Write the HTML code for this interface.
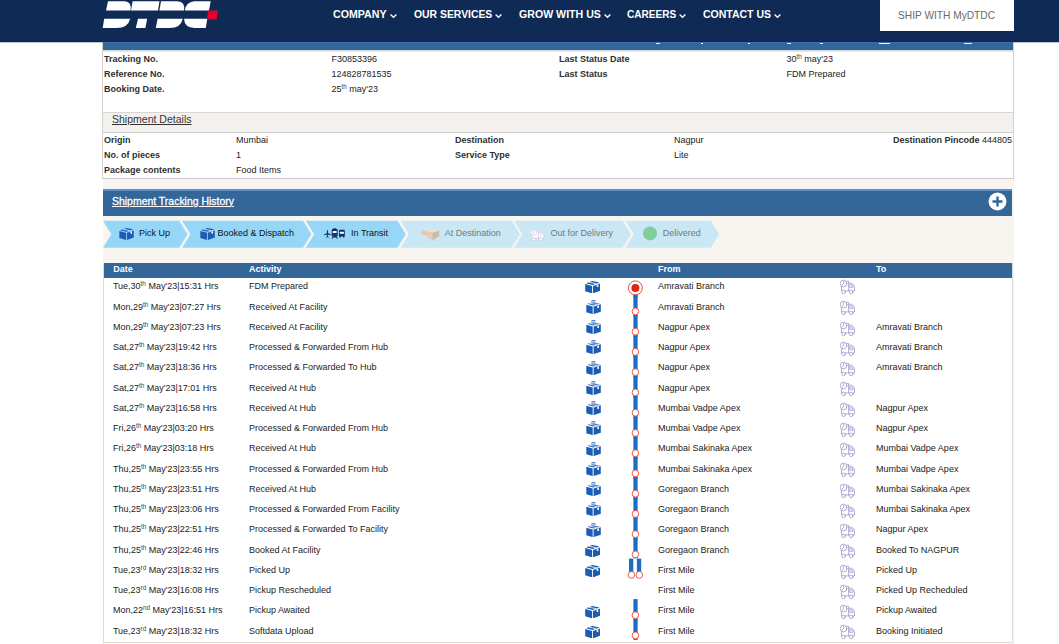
<!DOCTYPE html>
<html>
<head>
<meta charset="utf-8">
<title>DTDC Tracking</title>
<style>
*{box-sizing:border-box;margin:0;padding:0}
html,body{width:1059px;height:644px;overflow:hidden;background:#fff;font-family:"Liberation Sans",sans-serif;color:#222;}
body{position:relative}
.abs{position:absolute}
#hdr{position:absolute;left:0;top:0;width:1059px;height:42px;background:#0f2a54;z-index:10}
.nav{position:absolute;top:7px;color:#fff;font-weight:bold;font-size:11.5px;white-space:nowrap;line-height:14px;transform-origin:0 0}
.chev{position:absolute;top:13.6px}
#hdr:after{content:'';position:absolute;left:0;top:42px;width:1059px;height:1px;background:rgba(15,42,84,.28)}
#ship{position:absolute;left:880px;top:0;width:134px;height:31px;background:#fff}
#ship span{position:absolute;left:18px;top:8px;color:#6a6a6a;font-size:11px;line-height:14px;white-space:nowrap;transform-origin:0 0}
#wrap{position:absolute;left:102px;top:42px;width:912px;height:137px;border-left:1px solid #d2d2d2;border-right:1px solid #d2d2d2;background:#fff}
#bar1{position:absolute;left:103px;top:42px;width:910px;height:8px;background:#336699;border-top:1px solid #3f6da3;z-index:11}
#bar1b{position:absolute;left:103px;top:50px;width:910px;height:2px;background:linear-gradient(#d4d4d4,#e9e9e9)}
.t{position:absolute;font-size:9px;line-height:12px;white-space:nowrap;color:#222}
.b{font-weight:bold;color:#303030}
sup{color:#444;font-size:6.4px;line-height:0;vertical-align:baseline;position:relative;top:-3.4px}
#sdh{position:absolute;left:103px;top:112px;width:910px;height:21px;background:#f3f1ee;border-top:1px solid #d8d6d3;border-bottom:1px solid #d0cecb}
#sdh span{position:absolute;left:9px;top:-1px;font-size:10.8px;line-height:14px;text-decoration:underline;color:#333;transform-origin:0 0}
#beige{position:absolute;left:102.5px;top:178px;width:911.5px;height:466px;background:#f8f5f1;border-top:1px solid #ccc}
#tbox{position:absolute;left:103.2px;top:263px;width:909.8px;height:379.8px;background:#fff;border:1px solid #dcdcdc}
#hist{position:absolute;left:103.3px;top:188.8px;width:908.7px;height:27.5px;background:#336699;border-top:2px solid #5b90cc}
#hist span{position:absolute;left:8.7px;top:3px;font-size:10.8px;line-height:14px;color:#fff;text-decoration:underline;transform-origin:0 0;-webkit-text-stroke:0.3px #fff}
#thead{position:absolute;left:104.2px;top:263px;width:907.7px;height:14.6px;background:#336699}
#thead span{position:absolute;top:0px;font-size:9px;font-weight:bold;color:#fff;line-height:12px}

.st{position:absolute;top:227px;font-size:9px;line-height:12px;white-space:nowrap}
.ic{position:absolute}
.ln{position:absolute;background:#1a6dc2;width:4px}
.c{position:absolute;width:7.4px;height:7.8px;border:1px solid #e6493e;border-radius:50%;background:#fff}
</style>
</head>
<body>
<svg width="0" height="0" style="position:absolute">
<defs>
<symbol id="bo" viewBox="0 0 15.2 12.4">
<path d="M0.2 3.1 L7.1 4.9 L7.1 12.4 L0.2 10.3 Z" fill="#1c5db3"/>
<path d="M8.0 4.9 L15.1 2.5 L15.1 9.8 L8.0 12.4 Z" fill="#1c5db3"/>
<path d="M1.0 2.2 L7.3 0 L14.6 1.4 L7.6 3.9 Z" fill="#1c5db3"/>
<path d="M3.8 1.2 L11.2 2.7" stroke="#fff" stroke-width="0.8"/>
<path d="M11.6 3.8 L13.3 3.2 L13.3 6.2 L11.6 5.4 Z" fill="#fff"/>
</symbol>
<symbol id="bt" viewBox="0 0 14.6 12.8" preserveAspectRatio="none">
<path d="M5.4 0.45 H9.1" stroke="#1c5db3" stroke-width="0.7"/>
<path d="M4.6 1.9 H9.6" stroke="#1c5db3" stroke-width="0.7"/>
<path d="M0.3 4.4 L6.5 5.9 L6.5 12.8 L0.3 11.2 Z" fill="#1c5db3"/>
<path d="M7.4 5.9 L14.4 3.9 L14.4 10.6 L7.4 12.8 Z" fill="#1c5db3"/>
<path d="M1.2 3.5 L6.8 2.4 L13.7 3.3 L7.0 5.1 Z" fill="#1c5db3"/>
<path d="M3.8 3.0 L10.6 4.1" stroke="#fff" stroke-width="0.7"/>
<path d="M10.9 5.2 L12.6 4.7 L12.6 7.4 L10.9 6.8 Z" fill="#fff"/>
</symbol>
<symbol id="tk" viewBox="0 0 16 16" preserveAspectRatio="none">
<g fill="none" stroke="#a094ca" stroke-width="0.8" stroke-linecap="round" stroke-linejoin="round">
<circle cx="3.7" cy="4.5" r="3.4"/>
<path d="M3.7 2.3 V4.7 L2.4 5.8"/>
<path d="M6.9 2.4 H8.9 V11.9 M1.5 7.7 V11.9 H1.9 M5.6 11.9 H9.7"/>
<path d="M8.9 4.2 H12 Q14.2 5 15 8 V11.9 H13.5"/>
<path d="M10.4 5.8 H12.2 L13.6 8.3 H10.4 Z"/>
<circle cx="3.7" cy="12.9" r="1.8"/>
<circle cx="11.6" cy="12.9" r="1.8"/>
</g></symbol>
</defs></svg>
<div id="wrap"></div>
<div id="bar1"><i style="position:absolute;left:552.7px;top:0.3px;width:4.1px;height:1.2px;background:#fff;opacity:.9"></i><i style="position:absolute;left:597.8px;top:0.3px;width:2.7px;height:1.2px;background:#fff;opacity:.9"></i><i style="position:absolute;left:644.6px;top:0.3px;width:2.6px;height:1.2px;background:#fff;opacity:.9"></i><i style="position:absolute;left:684.0px;top:0.3px;width:4px;height:1.2px;background:#fff;opacity:.9"></i><i style="position:absolute;left:717.4px;top:0.3px;width:2.6px;height:1.2px;background:#fff;opacity:.9"></i><i style="position:absolute;left:775.7px;top:0.3px;width:11.7px;height:1.2px;background:#fff;opacity:.9"></i><i style="position:absolute;left:861.0px;top:0.3px;width:8px;height:1.2px;background:#fff;opacity:.9"></i></div><div id="bar1b"></div>
<div id="hdr">
  <svg class="abs" style="left:0;top:0" width="230" height="32" viewBox="0 0 230 32">
    <g fill="#fff">
      <path d="M108 1.2 L124.5 1.2 Q132 1.6 130.5 10.4 L106 10.4 Z"/>
      <path d="M132.6 1.2 L159.5 1.2 L158 10.4 L131 10.4 Z"/>
      <path d="M161 1.2 L177.5 1.2 Q185.4 1.6 184 10.4 L159.4 10.4 Z"/>
      <path d="M194 1.2 L210.7 1.2 L209 10.4 L184.8 10.4 Q186 2 194 1.2 Z"/>
      <path d="M104.2 18.7 L130.2 18.7 Q128 28 116.5 28 L102.7 28 Z"/>
      <path d="M138 18.7 L147.2 18.7 L145.4 28 L135.8 28 Z"/>
      <path d="M157.6 18.7 L182.8 18.7 Q180.6 28 170 28 L155.8 28 Z"/>
      <path d="M184 18.7 L207.3 18.7 L205.8 28 L194.5 28 Q184.5 27.6 184 18.7 Z"/>
    </g>
    <path d="M208.3 10.4 L218 10.4 L216.5 19.4 L206.8 19.4 Z" fill="#e4002b"/>
  </svg>
  <div class="nav" id="nav0" style="transform:scaleX(0.9234);left:332.9px">COMPANY</div>
  <svg class="chev" style="left:390.0px" width="7" height="5" viewBox="0 0 7 5"><path d="M0.6 0.6 L3.5 3.2 L6.4 0.6" fill="none" stroke="#fff" stroke-width="1.4"/></svg>
  <div class="nav" id="nav1" style="transform:scaleX(0.9031);left:413.7px">OUR SERVICES</div>
  <svg class="chev" style="left:494.8px" width="7" height="5" viewBox="0 0 7 5"><path d="M0.6 0.6 L3.5 3.2 L6.4 0.6" fill="none" stroke="#fff" stroke-width="1.4"/></svg>
  <div class="nav" id="nav2" style="transform:scaleX(0.9223);left:518.5px">GROW WITH US</div>
  <svg class="chev" style="left:603.7px" width="7" height="5" viewBox="0 0 7 5"><path d="M0.6 0.6 L3.5 3.2 L6.4 0.6" fill="none" stroke="#fff" stroke-width="1.4"/></svg>
  <div class="nav" id="nav3" style="transform:scaleX(0.8767);left:626.7px">CAREERS</div>
  <svg class="chev" style="left:679.1px" width="7" height="5" viewBox="0 0 7 5"><path d="M0.6 0.6 L3.5 3.2 L6.4 0.6" fill="none" stroke="#fff" stroke-width="1.4"/></svg>
  <div class="nav" id="nav4" style="transform:scaleX(0.9124);left:702.6px">CONTACT US</div>
  <svg class="chev" style="left:773.6px" width="7" height="5" viewBox="0 0 7 5"><path d="M0.6 0.6 L3.5 3.2 L6.4 0.6" fill="none" stroke="#fff" stroke-width="1.4"/></svg>
  <div id="ship"><span style="transform:scaleX(0.9246)">SHIP WITH MyDTDC</span></div>
</div>

<div class="t b" style="left:104px;top:53px">Tracking No.</div>
<div class="t" style="left:331.5px;top:53px">F30853396</div>
<div class="t b" style="left:104px;top:68px">Reference No.</div>
<div class="t" style="left:331.5px;top:68px">124828781535</div>
<div class="t b" style="left:104px;top:83px">Booking Date.</div>
<div class="t" style="left:331.5px;top:83px">25<sup>th</sup> may'23</div>
<div class="t b" style="left:559px;top:53px">Last Status Date</div>
<div class="t" style="left:786.4px;top:53px">30<sup>th</sup> may'23</div>
<div class="t b" style="left:559px;top:68px">Last Status</div>
<div class="t" style="left:786.4px;top:68px">FDM Prepared</div>
<div id="sdh"><span style="transform:scaleX(0.9740)">Shipment Details</span></div>
<div class="t b" style="left:104px;top:134px">Origin</div>
<div class="t" style="left:236px;top:134px">Mumbai</div>
<div class="t b" style="left:104px;top:149px">No. of pieces</div>
<div class="t" style="left:236px;top:149px">1</div>
<div class="t b" style="left:104px;top:164px">Package contents</div>
<div class="t" style="left:236px;top:164px">Food Items</div>
<div class="t b" style="left:455px;top:134px">Destination</div>
<div class="t" style="left:674px;top:134px">Nagpur</div>
<div class="t b" style="left:455px;top:149px">Service Type</div>
<div class="t" style="left:674px;top:149px">Lite</div>
<div class="t" style="left:893px;top:134px"><span class="b">Destination Pincode</span> 444805</div>
<div id="beige"></div><div id="tbox"></div>
<div id="hist"><span style="transform:scaleX(0.9681)">Shipment Tracking History</span>
  <svg class="abs" style="left:885px;top:1.6px" width="19" height="19" viewBox="0 0 19 19"><circle cx="9.5" cy="9.5" r="9" fill="#fff"/><path d="M9.5 4.5v10M4.5 9.5h10" stroke="#336699" stroke-width="2.4"/></svg>
</div>
<svg class="abs" style="left:0;top:216px" width="1059" height="40" viewBox="0 216 1059 40">
<path d="M103 220.8 L179.2 220.8 L187.6 234.3 L179.2 247.7 L103 247.7 L111.4 234.3 Z" fill="#96d6f6"/>
<path d="M182.1 220.8 L303.0 220.8 L311.4 234.3 L303.0 247.7 L182.1 247.7 L190.5 234.3 Z" fill="#96d6f6"/>
<path d="M305.8 220.8 L397.40000000000003 220.8 L405.8 234.3 L397.40000000000003 247.7 L305.8 247.7 L314.2 234.3 Z" fill="#96d6f6"/>
<path d="M400.5 220.8 L511.6 220.8 L520 234.3 L511.6 247.7 L400.5 247.7 L408.9 234.3 Z" fill="#c9e7f5"/>
<path d="M514 220.8 L622.6 220.8 L631 234.3 L622.6 247.7 L514 247.7 L522.4 234.3 Z" fill="#c9e7f5"/>
<path d="M625.5 220.8 L710.8000000000001 220.8 L719.2 234.3 L710.8000000000001 247.7 L625.5 247.7 L633.9 234.3 Z" fill="#c9e7f5"/>
<circle cx="650" cy="233.4" r="7" fill="#7ecf9b"/>
</svg>
<svg class="ic" style="left:119px;top:228px" width="15" height="12"><use href="#bo"/></svg>
<svg class="ic" style="left:200px;top:228px" width="15" height="12"><use href="#bo"/></svg>
<svg class="ic" style="left:324px;top:228px" width="21" height="11" viewBox="0 0 21 11"><g fill="#0f2f63">
<path d="M3.45 1.9 Q3.95 1.9 3.95 2.8 L3.95 5.0 L6.9 6.5 L6.9 7.3 L3.95 6.5 L3.9 8.4 L4.8 9.0 L4.8 9.5 L3.45 9.2 L2.1 9.5 L2.1 9.0 L3.0 8.4 L2.95 6.5 L0 7.3 L0 6.5 L2.95 5.0 L2.95 2.8 Q2.95 1.9 3.45 1.9 Z"/>
<path d="M10.7 0.3 Q13.7 0.6 13.7 2.6 V7.6 Q13.7 8.7 12.6 8.7 L14 10.7 H12.9 L12.1 9.5 H9.3 L8.5 10.7 H7.4 L8.8 8.7 Q7.7 8.7 7.7 7.6 V2.6 Q7.7 0.6 10.7 0.3 Z"/>
<path d="M16.2 1.7 H19.6 Q20.8 1.7 20.8 2.9 V8.4 H20.4 V9.5 H19.1 V8.6 H16.7 V9.5 H15.4 V8.4 H15 V2.9 Q15 1.7 16.2 1.7 Z"/>
</g><rect x="8.7" y="3.0" width="4" height="1.9" rx="0.5" fill="#fff"/><rect x="15.8" y="3.8" width="4.2" height="1.9" rx="0.5" fill="#fff"/>
<circle cx="9.3" cy="6.9" r="0.45" fill="#9bd8f6"/><circle cx="12.1" cy="6.9" r="0.45" fill="#9bd8f6"/></svg>
<svg class="ic" style="left:420.5px;top:228px" width="19" height="13" viewBox="0 0 19 13">
<path d="M0.6 2.4 L6.5 1.9 L10.4 2.3 L6.4 3.5 Z" fill="#ecdcc9"/>
<path d="M0.6 2.4 L6.4 3.5 L6.4 8.0 L0.6 6.8 Z" fill="#dfc9b1"/>
<path d="M6.4 3.6 L11.4 4.6 L11.4 12.6 L6.4 10 Z" fill="#e3cfb9"/>
<path d="M11.4 4.6 L18.1 2.6 L18.1 8.3 L11.4 12.6 Z" fill="#d0b9a0"/>
<path d="M6.4 3.6 L10.6 1.0 L17.6 1.3 L18.1 2.6 L11.4 4.6 Z" fill="#efe0cf"/>
<rect x="8.6" y="4.6" width="0.9" height="1.5" fill="#eaa59c"/>
</svg>
<svg class="ic" style="left:530px;top:228.5px" width="15" height="12.5" viewBox="0 0 16 14" preserveAspectRatio="none">
<g fill="#fdfbfd" stroke="#cfc4e0" stroke-width="0.7" stroke-linejoin="round">
<path d="M5.6 2.0 H9.0 V10.4 H1.6 V6.6"/>
<path d="M9.0 3.8 H12.2 Q14.2 4.6 14.9 7.2 V10.4 H9.0 Z"/>
<circle cx="3.9" cy="3.8" r="3.3"/>
<circle cx="3.9" cy="11.4" r="1.7"/><circle cx="11.8" cy="11.4" r="1.7"/>
</g><path d="M3.9 1.8 V4 L2.6 5" stroke="#b9a9d6" stroke-width="0.7" fill="none"/><path d="M10.6 5.2 H12.4 L13.6 7.2 H10.6 Z" fill="#e6dff0"/></svg>
<div class="st" style="left:139px;color:#111">Pick Up</div>
<div class="st" style="left:217.5px;color:#111">Booked &amp; Dispatch</div>
<div class="st" style="left:351.1px;color:#111">In Transit</div>
<div class="st" style="left:444.8px;color:#777">At Destination</div>
<div class="st" style="left:550.6px;color:#777">Out for Delivery</div>
<div class="st" style="left:662.7px;color:#777">Delivered</div>
<div id="thead">
  <span style="left:9.1px">Date</span>
  <span style="left:144.8px">Activity</span>
  <span style="left:553.8px">From</span>
  <span style="left:771.8px">To</span>
</div>
<div class="t" style="left:112.9px;top:280px">Tue,30<sup>th</sup> May'23|15:31 Hrs</div>
<div class="t" style="left:249px;top:280px">FDM Prepared</div>
<div class="t" style="left:658px;top:280px">Amravati Branch</div>
<svg class="ic" style="left:585px;top:281.0px" width="15.2" height="12.4"><use href="#bo"/></svg>
<svg class="ic" style="left:839.8px;top:279.3px" width="15.5" height="16"><use href="#tk"/></svg>
<div class="t" style="left:112.9px;top:301px">Mon,29<sup>th</sup> May'23|07:27 Hrs</div>
<div class="t" style="left:249px;top:301px">Received At Facility</div>
<div class="t" style="left:658px;top:301px">Amravati Branch</div>
<svg class="ic" style="left:586.1px;top:299.8px" width="15" height="14.1" preserveAspectRatio="none"><use href="#bt"/></svg>
<svg class="ic" style="left:839.8px;top:300.2px" width="15.5" height="16"><use href="#tk"/></svg>
<div class="t" style="left:112.9px;top:321px">Mon,29<sup>th</sup> May'23|07:23 Hrs</div>
<div class="t" style="left:249px;top:321px">Received At Facility</div>
<div class="t" style="left:658px;top:321px">Nagpur Apex</div>
<div class="t" style="left:876px;top:321px">Amravati Branch</div>
<svg class="ic" style="left:586.1px;top:320.1px" width="15" height="14.1" preserveAspectRatio="none"><use href="#bt"/></svg>
<svg class="ic" style="left:839.8px;top:320.5px" width="15.5" height="16"><use href="#tk"/></svg>
<div class="t" style="left:112.9px;top:341px">Sat,27<sup>th</sup> May'23|19:42 Hrs</div>
<div class="t" style="left:249px;top:341px">Processed &amp; Forwarded From Hub</div>
<div class="t" style="left:658px;top:341px">Nagpur Apex</div>
<div class="t" style="left:876px;top:341px">Amravati Branch</div>
<svg class="ic" style="left:586.1px;top:340.3px" width="15" height="14.1" preserveAspectRatio="none"><use href="#bt"/></svg>
<svg class="ic" style="left:839.8px;top:340.7px" width="15.5" height="16"><use href="#tk"/></svg>
<div class="t" style="left:112.9px;top:361px">Sat,27<sup>th</sup> May'23|18:36 Hrs</div>
<div class="t" style="left:249px;top:361px">Processed &amp; Forwarded To Hub</div>
<div class="t" style="left:658px;top:361px">Nagpur Apex</div>
<div class="t" style="left:876px;top:361px">Amravati Branch</div>
<svg class="ic" style="left:586.1px;top:360.6px" width="15" height="14.1" preserveAspectRatio="none"><use href="#bt"/></svg>
<svg class="ic" style="left:839.8px;top:361.0px" width="15.5" height="16"><use href="#tk"/></svg>
<div class="t" style="left:112.9px;top:382px">Sat,27<sup>th</sup> May'23|17:01 Hrs</div>
<div class="t" style="left:249px;top:382px">Received At Hub</div>
<div class="t" style="left:658px;top:382px">Nagpur Apex</div>
<svg class="ic" style="left:586.1px;top:380.8px" width="15" height="14.1" preserveAspectRatio="none"><use href="#bt"/></svg>
<svg class="ic" style="left:839.8px;top:381.2px" width="15.5" height="16"><use href="#tk"/></svg>
<div class="t" style="left:112.9px;top:402px">Sat,27<sup>th</sup> May'23|16:58 Hrs</div>
<div class="t" style="left:249px;top:402px">Received At Hub</div>
<div class="t" style="left:658px;top:402px">Mumbai Vadpe Apex</div>
<div class="t" style="left:876px;top:402px">Nagpur Apex</div>
<svg class="ic" style="left:586.1px;top:401.1px" width="15" height="14.1" preserveAspectRatio="none"><use href="#bt"/></svg>
<svg class="ic" style="left:839.8px;top:401.5px" width="15.5" height="16"><use href="#tk"/></svg>
<div class="t" style="left:112.9px;top:422px">Fri,26<sup>th</sup> May'23|03:20 Hrs</div>
<div class="t" style="left:249px;top:422px">Processed &amp; Forwarded From Hub</div>
<div class="t" style="left:658px;top:422px">Mumbai Vadpe Apex</div>
<div class="t" style="left:876px;top:422px">Nagpur Apex</div>
<svg class="ic" style="left:586.1px;top:421.3px" width="15" height="14.1" preserveAspectRatio="none"><use href="#bt"/></svg>
<svg class="ic" style="left:839.8px;top:421.7px" width="15.5" height="16"><use href="#tk"/></svg>
<div class="t" style="left:112.9px;top:442px">Fri,26<sup>th</sup> May'23|03:18 Hrs</div>
<div class="t" style="left:249px;top:442px">Received At Hub</div>
<div class="t" style="left:658px;top:442px">Mumbai Sakinaka Apex</div>
<div class="t" style="left:876px;top:442px">Mumbai Vadpe Apex</div>
<svg class="ic" style="left:586.1px;top:441.6px" width="15" height="14.1" preserveAspectRatio="none"><use href="#bt"/></svg>
<svg class="ic" style="left:839.8px;top:442.0px" width="15.5" height="16"><use href="#tk"/></svg>
<div class="t" style="left:112.9px;top:463px">Thu,25<sup>th</sup> May'23|23:55 Hrs</div>
<div class="t" style="left:249px;top:463px">Processed &amp; Forwarded From Hub</div>
<div class="t" style="left:658px;top:463px">Mumbai Sakinaka Apex</div>
<div class="t" style="left:876px;top:463px">Mumbai Vadpe Apex</div>
<svg class="ic" style="left:586.1px;top:461.8px" width="15" height="14.1" preserveAspectRatio="none"><use href="#bt"/></svg>
<svg class="ic" style="left:839.8px;top:462.2px" width="15.5" height="16"><use href="#tk"/></svg>
<div class="t" style="left:112.9px;top:483px">Thu,25<sup>th</sup> May'23|23:51 Hrs</div>
<div class="t" style="left:249px;top:483px">Received At Hub</div>
<div class="t" style="left:658px;top:483px">Goregaon Branch</div>
<div class="t" style="left:876px;top:483px">Mumbai Sakinaka Apex</div>
<svg class="ic" style="left:586.1px;top:482.1px" width="15" height="14.1" preserveAspectRatio="none"><use href="#bt"/></svg>
<svg class="ic" style="left:839.8px;top:482.5px" width="15.5" height="16"><use href="#tk"/></svg>
<div class="t" style="left:112.9px;top:503px">Thu,25<sup>th</sup> May'23|23:06 Hrs</div>
<div class="t" style="left:249px;top:503px">Processed &amp; Forwarded From Facility</div>
<div class="t" style="left:658px;top:503px">Goregaon Branch</div>
<div class="t" style="left:876px;top:503px">Mumbai Sakinaka Apex</div>
<svg class="ic" style="left:586.1px;top:502.3px" width="15" height="14.1" preserveAspectRatio="none"><use href="#bt"/></svg>
<svg class="ic" style="left:839.8px;top:502.7px" width="15.5" height="16"><use href="#tk"/></svg>
<div class="t" style="left:112.9px;top:523px">Thu,25<sup>th</sup> May'23|22:51 Hrs</div>
<div class="t" style="left:249px;top:523px">Processed &amp; Forwarded To Facility</div>
<div class="t" style="left:658px;top:523px">Goregaon Branch</div>
<div class="t" style="left:876px;top:523px">Nagpur Apex</div>
<svg class="ic" style="left:586.1px;top:522.6px" width="15" height="14.1" preserveAspectRatio="none"><use href="#bt"/></svg>
<svg class="ic" style="left:839.8px;top:523.0px" width="15.5" height="16"><use href="#tk"/></svg>
<div class="t" style="left:112.9px;top:544px">Thu,25<sup>th</sup> May'23|22:46 Hrs</div>
<div class="t" style="left:249px;top:544px">Booked At Facility</div>
<div class="t" style="left:658px;top:544px">Goregaon Branch</div>
<div class="t" style="left:876px;top:544px">Booked To NAGPUR</div>
<svg class="ic" style="left:585px;top:544.8px" width="15.2" height="12.4"><use href="#bo"/></svg>
<svg class="ic" style="left:839.8px;top:543.2px" width="15.5" height="16"><use href="#tk"/></svg>
<div class="t" style="left:112.9px;top:564px">Tue,23<sup>rd</sup> May'23|18:32 Hrs</div>
<div class="t" style="left:249px;top:564px">Picked Up</div>
<div class="t" style="left:658px;top:564px">First Mile</div>
<div class="t" style="left:876px;top:564px">Picked Up</div>
<svg class="ic" style="left:585px;top:565.1px" width="15.2" height="12.4"><use href="#bo"/></svg>
<svg class="ic" style="left:839.8px;top:563.5px" width="15.5" height="16"><use href="#tk"/></svg>
<div class="t" style="left:112.9px;top:584px">Tue,23<sup>rd</sup> May'23|16:08 Hrs</div>
<div class="t" style="left:249px;top:584px">Pickup Rescheduled</div>
<div class="t" style="left:658px;top:584px">First Mile</div>
<div class="t" style="left:876px;top:584px">Picked Up Recheduled</div>
<svg class="ic" style="left:839.8px;top:583.7px" width="15.5" height="16"><use href="#tk"/></svg>
<div class="t" style="left:112.9px;top:604px">Mon,22<sup>nd</sup> May'23|16:51 Hrs</div>
<div class="t" style="left:249px;top:604px">Pickup Awaited</div>
<div class="t" style="left:658px;top:604px">First Mile</div>
<div class="t" style="left:876px;top:604px">Pickup Awaited</div>
<svg class="ic" style="left:585px;top:605.6px" width="15.2" height="12.4"><use href="#bo"/></svg>
<svg class="ic" style="left:839.8px;top:604.0px" width="15.5" height="16"><use href="#tk"/></svg>
<div class="t" style="left:112.9px;top:625px">Tue,23<sup>rd</sup> May'23|18:32 Hrs</div>
<div class="t" style="left:249px;top:625px">Softdata Upload</div>
<div class="t" style="left:658px;top:625px">First Mile</div>
<div class="t" style="left:876px;top:625px">Booking Initiated</div>
<svg class="ic" style="left:585px;top:625.8px" width="15.2" height="12.4"><use href="#bo"/></svg>
<svg class="ic" style="left:839.8px;top:624.2px" width="15.5" height="16"><use href="#tk"/></svg>
<svg class="abs" style="left:0;top:0" width="1059" height="644" viewBox="0 0 1059 644"><rect x="633.4" y="293.6" width="4.2" height="4" fill="#1a6dc2"/><rect x="633.4" y="295.3" width="4.2" height="21.5" fill="#1a6dc2"/><rect x="633.4" y="315.6" width="4.2" height="21.5" fill="#1a6dc2"/><rect x="633.4" y="335.8" width="4.2" height="21.5" fill="#1a6dc2"/><rect x="633.4" y="356.1" width="4.2" height="21.5" fill="#1a6dc2"/><rect x="633.4" y="376.3" width="4.2" height="21.5" fill="#1a6dc2"/><rect x="633.4" y="396.6" width="4.2" height="21.5" fill="#1a6dc2"/><rect x="633.4" y="416.8" width="4.2" height="21.5" fill="#1a6dc2"/><rect x="633.4" y="437.1" width="4.2" height="21.5" fill="#1a6dc2"/><rect x="633.4" y="457.3" width="4.2" height="21.5" fill="#1a6dc2"/><rect x="633.4" y="477.6" width="4.2" height="21.5" fill="#1a6dc2"/><rect x="633.4" y="497.8" width="4.2" height="21.5" fill="#1a6dc2"/><rect x="633.4" y="518.1" width="4.2" height="21.5" fill="#1a6dc2"/><rect x="633.4" y="538.3" width="4.2" height="20.0" fill="#1a6dc2"/><rect x="629.0" y="558.6" width="4.3" height="18" fill="#1a6dc2"/><rect x="636.9" y="558.6" width="4.3" height="18" fill="#1a6dc2"/><rect x="633.4" y="599.1" width="4.2" height="21.5" fill="#1a6dc2"/><rect x="633.4" y="619.3" width="4.2" height="20.6" fill="#1a6dc2"/><circle cx="635.4" cy="287.9" r="7" fill="#fff" stroke="#e3392d" stroke-width="0.9"/><circle cx="635.4" cy="287.9" r="4" fill="#e2231a"/><ellipse cx="635.4" cy="311.4" rx="3.25" ry="3.45" fill="#fff" stroke="#e6493e" stroke-width="0.9"/><ellipse cx="635.4" cy="331.7" rx="3.25" ry="3.45" fill="#fff" stroke="#e6493e" stroke-width="0.9"/><ellipse cx="635.4" cy="351.9" rx="3.25" ry="3.45" fill="#fff" stroke="#e6493e" stroke-width="0.9"/><ellipse cx="635.4" cy="372.2" rx="3.25" ry="3.45" fill="#fff" stroke="#e6493e" stroke-width="0.9"/><ellipse cx="635.4" cy="392.4" rx="3.25" ry="3.45" fill="#fff" stroke="#e6493e" stroke-width="0.9"/><ellipse cx="635.4" cy="412.7" rx="3.25" ry="3.45" fill="#fff" stroke="#e6493e" stroke-width="0.9"/><ellipse cx="635.4" cy="432.9" rx="3.25" ry="3.45" fill="#fff" stroke="#e6493e" stroke-width="0.9"/><ellipse cx="635.4" cy="453.2" rx="3.25" ry="3.45" fill="#fff" stroke="#e6493e" stroke-width="0.9"/><ellipse cx="635.4" cy="473.4" rx="3.25" ry="3.45" fill="#fff" stroke="#e6493e" stroke-width="0.9"/><ellipse cx="635.4" cy="493.7" rx="3.25" ry="3.45" fill="#fff" stroke="#e6493e" stroke-width="0.9"/><ellipse cx="635.4" cy="513.9" rx="3.25" ry="3.45" fill="#fff" stroke="#e6493e" stroke-width="0.9"/><ellipse cx="635.4" cy="534.2" rx="3.25" ry="3.45" fill="#fff" stroke="#e6493e" stroke-width="0.9"/><ellipse cx="635.4" cy="554.4" rx="3.25" ry="3.45" fill="#fff" stroke="#e6493e" stroke-width="0.9"/><ellipse cx="631.4" cy="574.9" rx="3.25" ry="3.45" fill="#fff" stroke="#e6493e" stroke-width="0.9"/><ellipse cx="639.3" cy="574.9" rx="3.25" ry="3.45" fill="#fff" stroke="#e6493e" stroke-width="0.9"/><ellipse cx="635.4" cy="615.2" rx="3.25" ry="3.45" fill="#fff" stroke="#e6493e" stroke-width="0.9"/><ellipse cx="635.4" cy="635.4" rx="3.25" ry="3.45" fill="#fff" stroke="#e6493e" stroke-width="0.9"/></svg>
</body>
</html>
